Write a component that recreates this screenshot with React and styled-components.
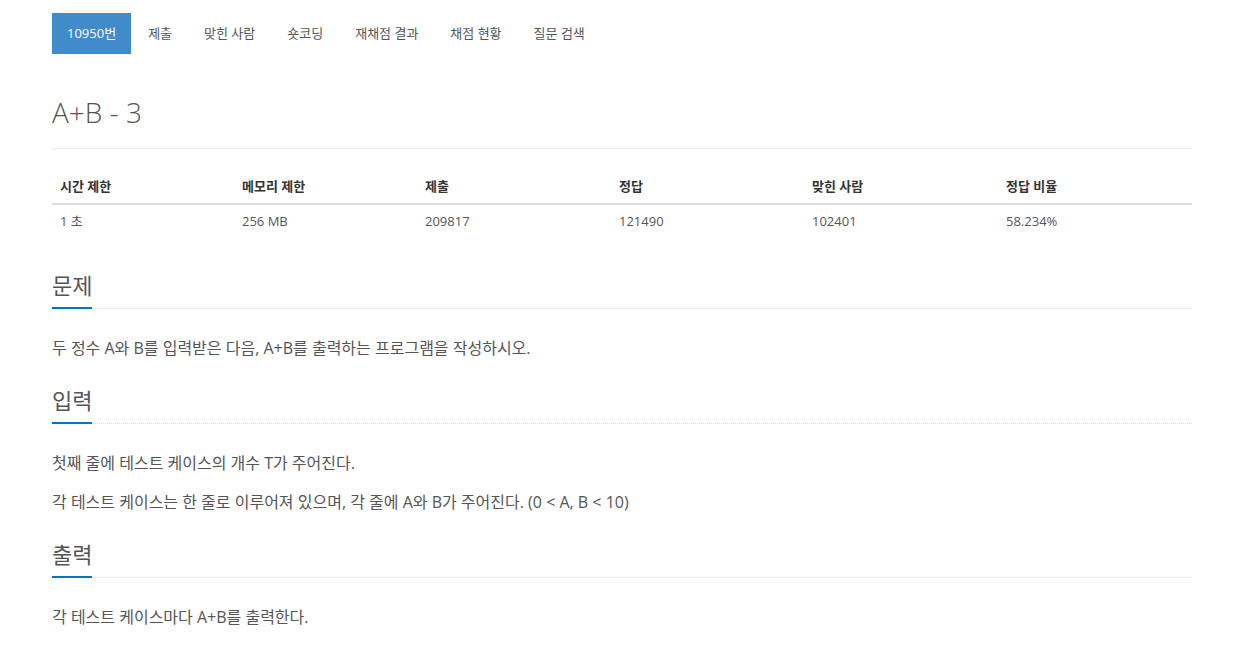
import React from "react";
import styled, { createGlobalStyle } from "styled-components";

const GlobalStyle = createGlobalStyle`
  body {
    margin: 0;
    background: #fff;
    font-family: "Open Sans", "Noto Sans CJK KR", sans-serif;
    color: #555;
  }
`;

const Page = styled.div`
  width: 1140px;
  padding: 13px 0 20px 52px;
`;

const Tabs = styled.ul`
  display: flex;
  list-style: none;
  margin: 0;
  padding: 0;
`;

const Tab = styled.li`
  height: 41px;
  box-sizing: border-box;
  display: flex;
  align-items: center;
  padding: 0 15px 3px;
  font-size: 13px;
  color: ${(p) => (p.active ? "#fff" : "#555")};
  background: ${(p) => (p.active ? "#428bca" : "transparent")};
  margin-right: 2px;
  cursor: pointer;
`;

const PageHeader = styled.div`
  margin-top: 40px;
  padding-bottom: 18px;
  border-bottom: 1px solid #eee;
`;

const Title = styled.h1`
  margin: 0;
  font-size: 28px;
  font-weight: 300;
  line-height: 36px;
  color: #555;
`;

const Table = styled.table`
  width: 100%;
  border-collapse: collapse;
  margin-top: 19px;
  font-size: 13px;
  table-layout: fixed;

  th {
    text-align: left;
    font-weight: 700;
    color: #333;
    padding: 8px 8px 7px;
    border-bottom: 2px solid #ddd;
    line-height: 20px;
  }

  td {
    padding: 6px 8px 9px;
    line-height: 20px;
    color: #555;
  }
`;

const Section = styled.section`
  margin-top: ${(p) => p.top || 24}px;
`;

const Headline = styled.div`
  border-bottom: 1px dotted #ddd;
  display: flex;
`;

const HeadlineText = styled.h2`
  margin: 0 0 -1px;
  font-size: 22px;
  font-weight: 400;
  line-height: 30px;
  padding-bottom: 7px;
  color: #555;
  border-bottom: 2px solid #0076c0;
`;

const Text = styled.div`
  font-size: 16px;
  line-height: 26px;
  color: #555;
  padding-top: 26px;

  p {
    margin: 0 0 13px;
  }
`;

const stats = [
  ["시간 제한", "1 초", 182],
  ["메모리 제한", "256 MB", 183],
  ["제출", "209817", 194],
  ["정답", "121490", 193],
  ["맞힌 사람", "102401", 194],
  ["정답 비율", "58.234%", 194],
];

const tabs = ["10950번", "제출", "맞힌 사람", "숏코딩", "재채점 결과", "채점 현황", "질문 검색"];

export default function App() {
  return (
    <Page>
      <GlobalStyle />
      <Tabs>
        {tabs.map((t, i) => (
          <Tab key={t} active={i === 0}>
            {t}
          </Tab>
        ))}
      </Tabs>

      <PageHeader>
        <Title>A+B - 3</Title>
      </PageHeader>

      <Table>
        <colgroup>
          {stats.map(([h, , w]) => (
            <col key={h} style={{ width: w }} />
          ))}
        </colgroup>
        <thead>
          <tr>
            {stats.map(([h]) => (
              <th key={h}>{h}</th>
            ))}
          </tr>
        </thead>
        <tbody>
          <tr>
            {stats.map(([h, v]) => (
              <td key={h}>{v}</td>
            ))}
          </tr>
        </tbody>
      </Table>

      <Section top={30}>
        <Headline>
          <HeadlineText>문제</HeadlineText>
        </Headline>
        <Text>
          <p>두 정수 A와 B를 입력받은 다음, A+B를 출력하는 프로그램을 작성하시오.</p>
        </Text>
      </Section>

      <Section>
        <Headline>
          <HeadlineText>입력</HeadlineText>
        </Headline>
        <Text>
          <p>첫째 줄에 테스트 케이스의 개수 T가 주어진다.</p>
          <p>각 테스트 케이스는 한 줄로 이루어져 있으며, 각 줄에 A와 B가 주어진다. (0 &lt; A, B &lt; 10)</p>
        </Text>
      </Section>

      <Section>
        <Headline>
          <HeadlineText>출력</HeadlineText>
        </Headline>
        <Text>
          <p>각 테스트 케이스마다 A+B를 출력한다.</p>
        </Text>
      </Section>
    </Page>
  );
}
